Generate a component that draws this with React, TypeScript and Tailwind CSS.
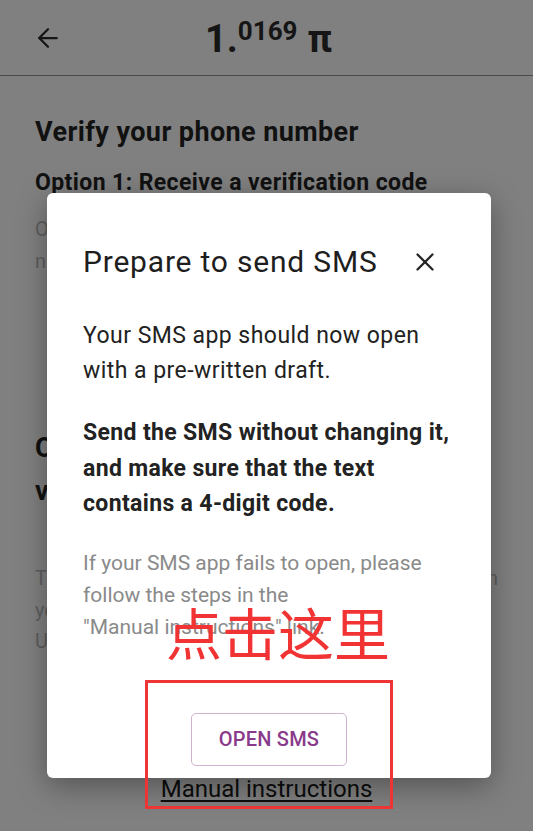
import { ArrowLeft, X } from "lucide-react";

export default function App() {
  return (
    <div className="relative h-[831px] w-[533px] overflow-hidden bg-[#808080] font-['Roboto',sans-serif] text-[#111]">
      {/* header */}
      <header className="grid h-[76px] grid-cols-[1fr_auto_1fr] items-center border-b-[1.5px] border-[#4a4a4a] px-[33px]">
        <ArrowLeft size={30} strokeWidth={1.8} className="text-[#151515]" />
        <div className="ml-[4px] flex items-start font-bold leading-none text-[#151515]">
          <span className="mt-[2px] text-[38px]">1.</span>
          <span className="text-[26px]">0169</span>
          <span className="ml-[10px] mt-[2px] text-[38px]">π</span>
        </div>
        <div />
      </header>

      {/* page behind the dialog */}
      <main className="px-[35px]">
        <h2 className="mt-[39px] text-[27px] font-bold leading-[34px] tracking-[0.4px]">
          Verify your phone number
        </h2>
        <h3 className="mt-[19px] text-[23px] font-bold leading-[30px] tracking-[0.4px]">
          Option 1: Receive a verification code
        </h3>
        <p className="mt-[15px] text-[20px] leading-[32px] text-[#5e5e5e]">
          Our system will send you a code, which you
          <br />
          need to enter below.
        </p>

        <h3 className="mt-[150px] text-[27px] font-bold leading-[43px] tracking-[0.4px]">
          Option 2: Send an SMS to
          <br />
          verify
        </h3>
        <div className="mt-[50px] text-[20px] leading-[31.5px] text-[#5e5e5e]">
          <div className="[text-align-last:justify]">This option sends an SMS from</div>
          <div>your phone to ours.</div>
          <div>Use the button below.</div>
        </div>

        <div className="mt-[116px] text-center text-[24px] leading-[30px] text-[#0d0d0d] underline underline-offset-[3px]">
          Manual instructions
        </div>
      </main>

      {/* dialog */}
      <div className="absolute left-[47px] top-[193px] flex h-[585px] w-[444px] flex-col rounded-[6px] bg-white px-[36px] shadow-[0_8px_30px_rgba(0,0,0,0.35)]">
        <div className="flex items-center justify-between pt-[51px]">
          <h1 className="text-[30px] leading-[36px] tracking-[0.8px] text-[#1e1e1e]">Prepare to send SMS</h1>
          <X size={30} strokeWidth={1.8} className="mr-[15px] text-[#222]" />
        </div>
        <p className="mt-[38px] text-[23px] leading-[35px] tracking-[0.45px] text-[#222]">
          Your SMS app should now open
          <br />
          with a pre-written draft.
        </p>
        <p className="mt-[27px] text-[23px] font-bold leading-[35.5px] tracking-[0.35px] text-[#222]">
          Send the SMS without changing it,
          <br />
          and make sure that the text
          <br />
          contains a 4-digit code.
        </p>
        <p className="mt-[25px] text-[21px] leading-[32px] text-[#8a8a8a]">
          If your SMS app fails to open, please
          <br />
          follow the steps in the
          <br />
          "Manual instructions" link.
        </p>
        <div className="mt-[70px] flex justify-center">
          <button className="h-[53px] w-[156px] rounded-[5px] border border-[#cfb3cf] text-[20px] font-medium tracking-[0.2px] text-[#8a3a8a]">
            OPEN SMS
          </button>
        </div>
      </div>

      {/* annotation */}
      <div className="absolute left-[166px] top-[603px] font-['Noto_Sans_CJK_SC',sans-serif] text-[56px] leading-none text-[#f23333]">
        点击这里
      </div>
      <div className="absolute left-[145px] top-[680px] h-[129px] w-[248px] border-[3px] border-[#ee3535]" />
    </div>
  );
}
